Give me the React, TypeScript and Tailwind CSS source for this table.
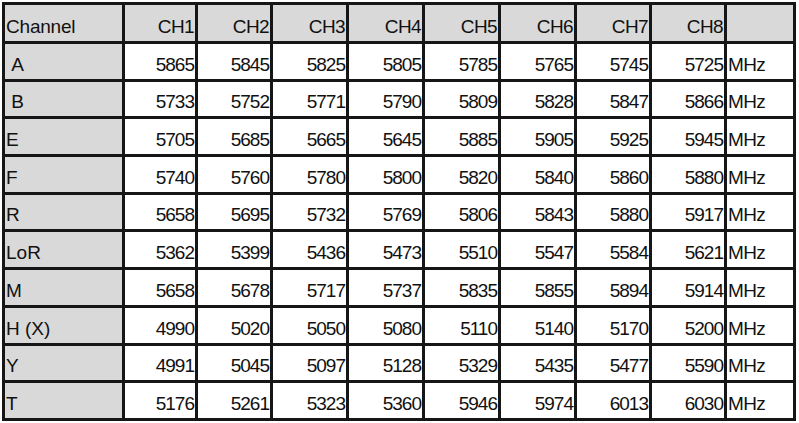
import React from 'react';

const channels = ['CH1', 'CH2', 'CH3', 'CH4', 'CH5', 'CH6', 'CH7', 'CH8'];

const bands: { name: string; freqs: number[] }[] = [
    { name: '\u00a0A', freqs: [5865, 5845, 5825, 5805, 5785, 5765, 5745, 5725] },
    { name: '\u00a0B', freqs: [5733, 5752, 5771, 5790, 5809, 5828, 5847, 5866] },
    { name: 'E', freqs: [5705, 5685, 5665, 5645, 5885, 5905, 5925, 5945] },
    { name: 'F', freqs: [5740, 5760, 5780, 5800, 5820, 5840, 5860, 5880] },
    { name: 'R', freqs: [5658, 5695, 5732, 5769, 5806, 5843, 5880, 5917] },
    { name: 'LoR', freqs: [5362, 5399, 5436, 5473, 5510, 5547, 5584, 5621] },
    { name: 'M', freqs: [5658, 5678, 5717, 5737, 5835, 5855, 5894, 5914] },
    { name: 'H (X)', freqs: [4990, 5020, 5050, 5080, 5110, 5140, 5170, 5200] },
    { name: 'Y', freqs: [4991, 5045, 5097, 5128, 5329, 5435, 5477, 5590] },
    { name: 'T', freqs: [5176, 5261, 5323, 5360, 5946, 5974, 6013, 6030] },
];

// cells share a 3px dark grid, text sits on the bottom like the spreadsheet export
const cell = 'border-[3px] border-[#161616] align-bottom pb-[5px] leading-none';

const App: React.FC = () => {
    return (
        <div className="w-[799px] h-[423px] bg-white overflow-hidden pt-[2px] pl-[2px] font-['Liberation_Sans',Arial,sans-serif] text-[19px] text-[#111]">
            <table className="table-fixed border-collapse w-[794px]">
                <colgroup>
                    <col className="w-[120px]" />
                    <col className="w-[73px]" />
                    <col className="w-[75px]" />
                    <col className="w-[76px]" />
                    <col className="w-[76px]" />
                    <col className="w-[76px]" />
                    <col className="w-[76px]" />
                    <col className="w-[75px]" />
                    <col className="w-[75px]" />
                    <col className="w-[69px]" />
                </colgroup>
                <thead>
                    <tr className="bg-[#d9d9d9] h-[39px]">
                        <th className={`${cell} text-left font-normal pl-[1px] tracking-[-0.2px]`}>Channel</th>
                        {channels.map((ch) => (
                            <th key={ch} className={`${cell} text-right font-normal pr-[1px] tracking-[-0.6px]`}>{ch}</th>
                        ))}
                        <th className={cell}></th>
                    </tr>
                </thead>
                <tbody>
                    {bands.map((band) => (
                        <tr key={band.name} className="h-[37.7px]">
                            <td className={`${cell} bg-[#d9d9d9] pl-[1px] whitespace-pre`}>{band.name}</td>
                            {band.freqs.map((f, i) => (
                                <td key={i} className={`${cell} text-right pr-[1px] tracking-[-1px]`}>{f}</td>
                            ))}
                            <td className={`${cell} pl-[1px] tracking-[-0.6px]`}>MHz</td>
                        </tr>
                    ))}
                </tbody>
            </table>
        </div>
    );
};

export default App;
